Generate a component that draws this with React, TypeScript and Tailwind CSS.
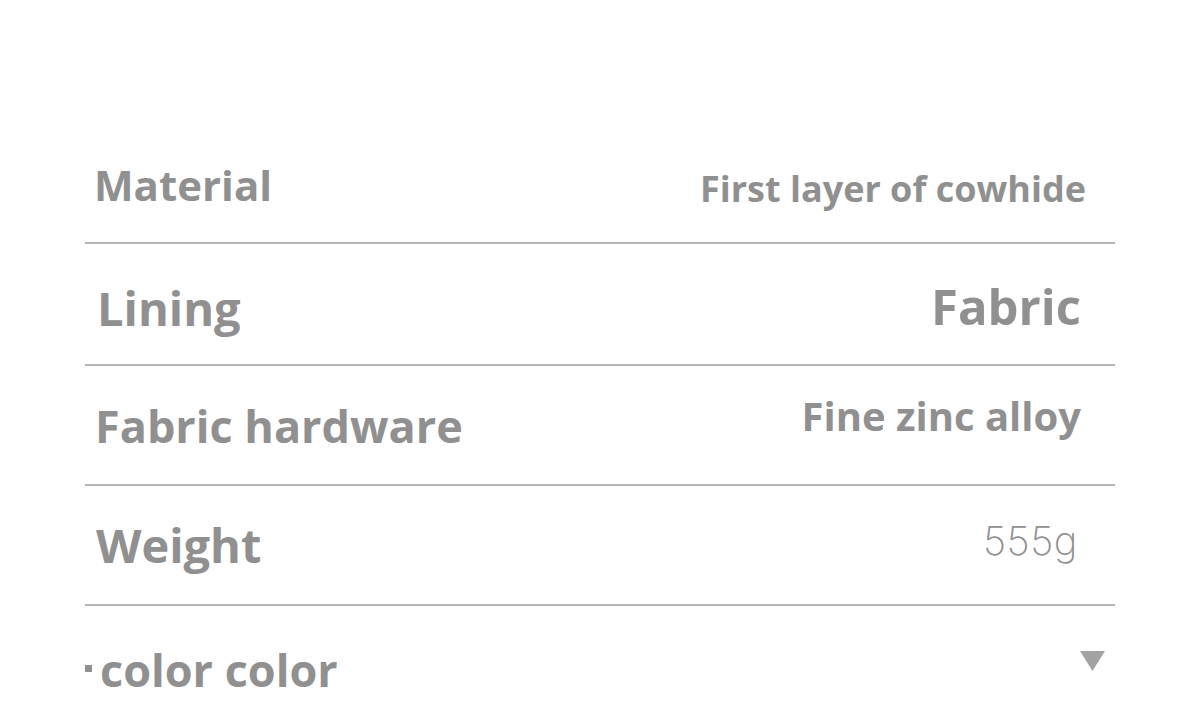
const rows = [
  {
    label: 'Material',
    labelCls: 'text-[42px] pt-[42px] pl-[9px]',
    value: 'First layer of cowhide',
    valueCls: 'text-[36px] pt-[49px] pr-[29px]',
    h: 'h-[122px]',
  },
  {
    label: 'Lining',
    labelCls: 'text-[47px] pt-[41px] pl-[12px]',
    value: 'Fabric',
    valueCls: 'text-[49px] pt-[38px] pr-[34px]',
    h: 'h-[122px]',
  },
  {
    label: 'Fabric hardware',
    labelCls: 'text-[45px] pt-[37px] pl-[10px]',
    value: 'Fine zinc alloy',
    valueCls: 'text-[40px] pt-[30px] pr-[34px]',
    h: 'h-[120px]',
  },
];

const App = () => {
  return (
    <div className="w-[1200px] h-[716px] bg-white overflow-hidden font-['Open_Sans',sans-serif] text-[#909090]">
      <div className="ml-[85px] w-[1030px] pt-[122px]">
        {rows.map((r) => (
          <div key={r.label} className={`${r.h} flex justify-between items-start border-b-2 border-[#b4b4b4]`}>
            <span className={`${r.labelCls} font-bold leading-none`}>{r.label}</span>
            <span className={`${r.valueCls} font-bold leading-none`}>{r.value}</span>
          </div>
        ))}
        <div className="h-[120px] flex justify-between items-start border-b-2 border-[#b4b4b4]">
          <span className="text-[47px] pt-[36px] pl-[11px] font-bold leading-none">Weight</span>
          <span className="text-[40px] pt-[35px] pr-[37px] font-['Inter',sans-serif] font-extralight leading-none tracking-[0.5px]">
            555g
          </span>
        </div>
        <div className="flex justify-between items-start">
          <div className="flex items-center pt-[41px]">
            <span className="w-[7px] h-[7px] bg-[#909090] mr-[8px] mt-[-2px]" />
            <span className="text-[45px] font-bold leading-none">color color</span>
          </div>
          <svg width="25" height="20" viewBox="0 0 25 20" className="mt-[45px] mr-[10px]">
            <polygon points="0,0 25,0 12.5,20" fill="#a3a3a3" />
          </svg>
        </div>
      </div>
    </div>
  );
};

export default App;
